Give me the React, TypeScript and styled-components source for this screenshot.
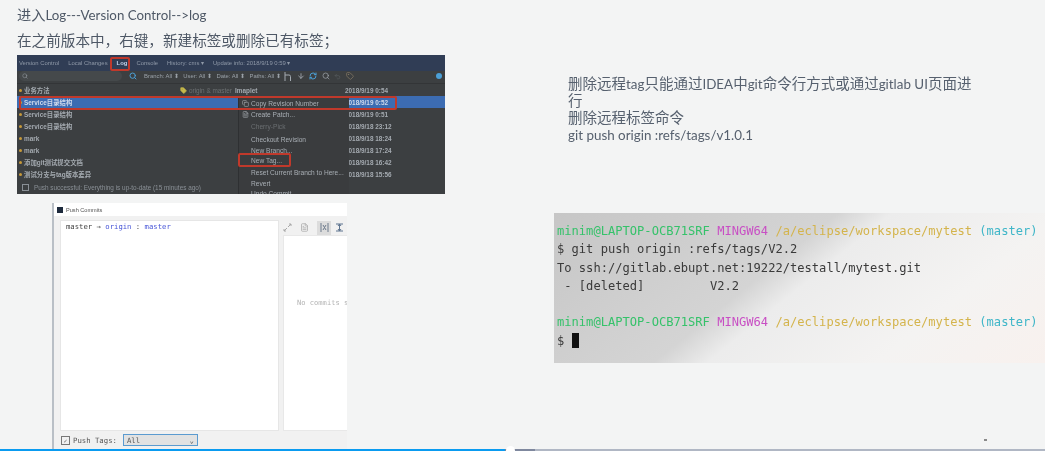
import styled, { createGlobalStyle } from 'styled-components';
import { ArrowDown, Copy, FileText, RefreshCw, Search, Tag, Undo2 } from 'lucide-react';

const GlobalStyle = createGlobalStyle`
    html, body {
        margin: 0;
        padding: 0;
        background: #f3f4f4;
    }
    #root {
        width: 1045px;
        height: 451px;
        overflow: hidden;
    }
`;

const Page = styled.div`
    width: 1045px;
    height: 451px;
    display: flex;
    flex-direction: column;
    background: #f3f4f4;
    font-family: 'Lato', 'Noto Sans CJK SC', sans-serif;
    color: #4e5866;
`;
const Slides = styled.div`
    flex: 1;
    min-height: 0;
    display: grid;
    grid-template-columns: 554px 491px;
    overflow: hidden;
`;
const LeftColumn = styled.section`
    display: flex;
    flex-direction: column;
    padding: 7px 0 0 17px;
`;
const Heading = styled.p`
    margin: 0;
    font-size: 13.3px;
    line-height: 17px;
    filter: blur(0.4px);
`;
const SubHeading = styled.p`
    margin: 5px 0 3px;
    font-size: 14.6px;
    line-height: 23px;
    filter: blur(0.4px);
`;
const Cjk = styled.span<{ $size?: number }>`
    font-size: ${(p) => p.$size ?? 14.5}px;
    line-height: 1;
`;

/* IDE log screenshot */
const Ide = styled.div`
    position: relative;
    flex: none;
    width: 428px;
    height: 139px;
    background: #3c3f41;
    overflow: hidden;
    color: #a9b0b6;
    font-family: 'Liberation Sans', 'Noto Sans CJK SC', sans-serif;
    font-size: 6.4px;
    filter: blur(0.5px);
`;
const IdeTabs = styled.div`
    height: 16px;
    display: flex;
    align-items: center;
    gap: 9px;
    padding-left: 2px;
    background: #303d55;
    font-size: 5.9px;
`;
const IdeTab = styled.span<{ $active?: boolean }>`
    color: ${(p) => (p.$active ? '#c4d4ec' : '#8f99a8')};
    font-weight: ${(p) => (p.$active ? 700 : 400)};
`;
const IdeFilters = styled.div`
    height: 13px;
    box-sizing: border-box;
    display: flex;
    align-items: center;
    padding: 0 3px 2px 2px;
    background: #3c3f41;
    border-bottom: 1px solid #333537;
    color: #9aa1a8;
`;
const SearchField = styled.div`
    width: 103px;
    height: 10px;
    flex: none;
    display: flex;
    align-items: center;
    padding-left: 3px;
    box-sizing: border-box;
    border-radius: 5px;
    background: #45494b;
    color: #9aa1a8;
`;
const FilterLabels = styled.div`
    width: 140px;
    flex: none;
    display: flex;
    gap: 4.5px;
    margin-left: 7px;
    font-size: 5.9px;
    white-space: nowrap;
`;
const FilterIcons = styled.div`
    display: flex;
    align-items: center;
    gap: 4.5px;
    flex: 1;
    color: #a4abb2;
`;
const BlueDot = styled.span`
    width: 6px;
    height: 6px;
    border-radius: 50%;
    background: #4b9fd6;
`;
const IdeRow = styled.div<{ $selected?: boolean }>`
    height: 12px;
    display: grid;
    grid-template-columns: 161px 55px 110px 1fr;
    align-items: center;
    padding-left: 2px;
    background: ${(p) => (p.$selected ? '#3c6cb2' : 'transparent')};
    color: ${(p) => (p.$selected ? '#cfdaec' : '#a4aab0')};
`;
const Message = styled.span`
    display: flex;
    align-items: center;
    gap: 2px;
    font-weight: 700;
    white-space: nowrap;
`;
const Node = styled.i`
    width: 3px;
    height: 3px;
    border-radius: 50%;
    background: #c79a3a;
`;
const RefName = styled.span`
    display: flex;
    align-items: center;
    gap: 2px;
    color: #6c7072;
    white-space: nowrap;
`;
const Author = styled.span`
    font-weight: 700;
`;
const DateCell = styled.span`
    font-weight: 700;
    white-space: nowrap;
`;
const IdeStatus = styled.div`
    height: 14px;
    display: flex;
    align-items: center;
    gap: 5px;
    padding-left: 5px;
    color: #8a9096;
`;
const StatusBox = styled.i`
    width: 5px;
    height: 5px;
    border: 1px solid #8a9096;
`;
const ContextMenu = styled.div`
    position: absolute;
    left: 222px;
    top: 42px;
    width: 110px;
    height: 100px;
    padding-left: 12px;
    box-sizing: border-box;
    background: #3a3c3e;
    box-shadow: -1px 0 0 #2e3032;
    color: #a8aeb4;
    font-size: 6.6px;
`;
const MenuItem = styled.div<{ $muted?: boolean; $h: number }>`
    position: relative;
    height: ${(p) => p.$h}px;
    display: flex;
    align-items: center;
    white-space: nowrap;
    color: ${(p) => (p.$muted ? '#6b6f72' : '#a8aeb4')};
    svg {
        position: absolute;
        left: -9px;
    }
`;
const RedMark = styled.div<{ $l: number; $t: number; $w: number; $h: number }>`
    position: absolute;
    left: ${(p) => p.$l}px;
    top: ${(p) => p.$t}px;
    width: ${(p) => p.$w}px;
    height: ${(p) => p.$h}px;
    box-sizing: border-box;
    border: 2px solid #c0392b;
    border-radius: 2px;
`;

/* Push Commits dialog */
const PushDialog = styled.div`
    width: 295px;
    height: 246px;
    flex: none;
    margin: 9px 0 0 35px;
    display: flex;
    flex-direction: column;
    background: #f1f1f1;
    border-left: 2px solid #b9bfc6;
    box-sizing: border-box;
    font-family: 'DejaVu Sans Mono', monospace;
    filter: blur(0.4px);
`;
const DialogTitle = styled.div`
    height: 13px;
    flex: none;
    display: flex;
    align-items: center;
    gap: 3px;
    padding-left: 3px;
    background: #ffffff;
    font-family: 'Liberation Sans', sans-serif;
    font-size: 5.6px;
    color: #555;
`;
const TitleIcon = styled.i`
    width: 6px;
    height: 6px;
    background: #1d2a3c;
`;
const DialogBody = styled.div`
    height: 215px;
    flex: none;
    display: grid;
    grid-template-columns: 219px 1fr;
    gap: 4px;
    padding: 4px 0 0 6px;
    box-sizing: border-box;
`;
const BranchPanel = styled.div`
    background: #ffffff;
    border: 1px solid #e6e6e6;
    padding: 1px 5px;
    font-size: 7.25px;
    line-height: 9px;
    color: #444;
`;
const Remote = styled.span`
    color: #4a58d8;
`;
const DetailsColumn = styled.div`
    display: flex;
    flex-direction: column;
    min-width: 0;
`;
const DetailsToolbar = styled.div`
    height: 15px;
    flex: none;
    display: flex;
    align-items: center;
    gap: 8px;
    color: #a8a8a8;
`;
const ToggleIcon = styled.span<{ $on?: boolean }>`
    width: 14px;
    height: 14px;
    display: flex;
    align-items: center;
    justify-content: center;
    background: ${(p) => (p.$on ? '#dcdcdc' : 'transparent')};
    color: ${(p) => (p.$on ? '#6d7a8c' : '#5f7590')};
    & + & {
        margin-left: -7px;
    }
`;
const DetailsPanel = styled.div`
    flex: 1;
    padding: 62px 0 0 13px;
    background: #ffffff;
    border: 1px solid #e8e8e8;
    border-right: 0;
    font-size: 7.1px;
    color: #b4b4b4;
    white-space: nowrap;
    overflow: hidden;
`;
const DialogFooter = styled.div`
    display: flex;
    align-items: center;
    height: 18px;
    padding-left: 7px;
    box-sizing: border-box;
    font-size: 7.3px;
    color: #555;
`;
const CheckBox = styled.span`
    width: 7px;
    height: 7px;
    margin-right: 3px;
    border: 1px solid #777;
    font-size: 6px;
    line-height: 7px;
    text-align: center;
`;
const SelectBox = styled.div`
    width: 75px;
    height: 12px;
    margin-left: 6px;
    padding: 0 3px;
    box-sizing: border-box;
    display: flex;
    align-items: center;
    justify-content: space-between;
    background: #e2e2e2;
    border: 1px solid #5b9bd0;
`;

/* right column */
const RightColumn = styled.section`
    display: flex;
    flex-direction: column;
    padding-top: 76px;
`;
const Notes = styled.div`
    width: 405px;
    height: 68px;
    flex: none;
    margin-left: 14px;
    font-size: 13.4px;
    line-height: 17px;
    color: #56606e;
    filter: blur(0.4px);
`;
const Terminal = styled.pre`
    height: 150px;
    flex: none;
    margin: 69px 0 0;
    padding: 9px 0 0 3px;
    box-sizing: border-box;
    background: linear-gradient(141deg, #c6c6c6 0%, #d4d4d4 42%, #ececec 50%, #f4f3f2 75%, #f8f1ee 100%);
    font-family: 'DejaVu Sans Mono', monospace;
    font-size: 12.1px;
    line-height: 18.3px;
    color: #3a3a3a;
    overflow: hidden;
    filter: blur(0.4px);
`;
const TermColor = styled.span<{ $c: string }>`
    color: ${(p) => p.$c};
`;
const Cursor = styled.span`
    display: inline-block;
    width: 7px;
    height: 15px;
    vertical-align: -3px;
    background: #111;
`;
const Speck = styled.i`
    width: 3px;
    height: 2px;
    margin: 76px 0 0 430px;
    background: #8a8a8a;
`;

/* video progress bar */
const Progress = styled.div`
    position: relative;
    flex: none;
    height: 2px;
    background: #b0b7c4;
`;
const Played = styled.div`
    height: 2px;
    background: linear-gradient(to right, #0a9bf0 505px, #7f889e 505px);
`;
const Knob = styled.i`
    position: absolute;
    left: 506px;
    top: -3px;
    width: 9px;
    height: 9px;
    border-radius: 50%;
    background: #ffffff;
`;

const rows = [
    { msg: '业务方法', date: '2018/9/19 0:54', head: true },
    { msg: 'Service目录结构', date: '2018/9/19 0:52', selected: true },
    { msg: 'Service目录结构', date: '2018/9/19 0:51' },
    { msg: 'Service目录结构', date: '2018/9/18 23:12' },
    { msg: 'mark', date: '2018/9/18 18:24' },
    { msg: 'mark', date: '2018/9/18 17:24' },
    { msg: '添加git测试提交文档', date: '2018/9/18 16:42' },
    { msg: '测试分支与tag版本差异', date: '2018/9/18 15:56' },
];

const Prompt = () => (
    <>
        <TermColor $c="#35c26a">minim@LAPTOP-OCB71SRF</TermColor> <TermColor $c="#c84fc4">MINGW64</TermColor>{' '}
        <TermColor $c="#d4b44c">/a/eclipse/workspace/mytest</TermColor> <TermColor $c="#3fb6c8">(master)</TermColor>
    </>
);

export default function App() {
    return (
        <Page>
            <GlobalStyle />
            <Slides>
                <LeftColumn>
                    <Heading>
                        <Cjk $size={14.2}>进入</Cjk>Log---Version Control--&gt;log
                    </Heading>
                    <SubHeading>在之前版本中，右键，新建标签或删除已有标签；</SubHeading>
                    <Ide>
                        <IdeTabs>
                            <IdeTab>Version Control</IdeTab>
                            <IdeTab>Local Changes</IdeTab>
                            <IdeTab $active>Log</IdeTab>
                            <IdeTab>Console</IdeTab>
                            <IdeTab>History: cms ▾</IdeTab>
                            <IdeTab>Update info: 2018/9/19 0:59 ▾</IdeTab>
                        </IdeTabs>
                        <IdeFilters>
                            <SearchField>
                                <Search size={6} strokeWidth={2} />
                            </SearchField>
                            <Search size={8} strokeWidth={3} color="#4b9fd6" style={{ marginLeft: 7 }} />
                            <FilterLabels>
                                <span>Branch: All ⬍</span>
                                <span>User: All ⬍</span>
                                <span>Date: All ⬍</span>
                                <span>Paths: All ⬍</span>
                            </FilterLabels>
                            <FilterIcons>
                                <svg width="8" height="9" viewBox="0 0 8 9" fill="none" stroke="currentColor">
                                    <path d="M1 0v9M1 3h4a1.5 1.5 0 0 1 1.5 1.5V9" />
                                </svg>
                                <ArrowDown size={8} strokeWidth={2.5} />
                                <RefreshCw size={8} strokeWidth={3} color="#4b9fd6" />
                                <Search size={8} strokeWidth={2} />
                                <Undo2 size={7} strokeWidth={2} color="#5a5e62" />
                                <Tag size={8} strokeWidth={2} color="#8d7f6a" />
                            </FilterIcons>
                            <BlueDot />
                        </IdeFilters>
                        {rows.map((row) => (
                            <IdeRow key={row.date} $selected={row.selected}>
                                <Message>
                                    <Node />
                                    {row.msg}
                                </Message>
                                <RefName>
                                    {row.head ? (
                                        <>
                                            <Tag size={7} color="#a8a04a" fill="#c8b94a" />
                                            origin &amp; master
                                        </>
                                    ) : null}
                                </RefName>
                                <Author>{row.head ? 'Imaplet' : null}</Author>
                                <DateCell>{row.date}</DateCell>
                            </IdeRow>
                        ))}
                        <IdeStatus>
                            <StatusBox />
                            Push successful: Everything is up-to-date (15 minutes ago)
                        </IdeStatus>
                        <ContextMenu>
                            <MenuItem $h={12}>
                                <Copy size={7} />
                                Copy Revision Number
                            </MenuItem>
                            <MenuItem $h={11}>
                                <FileText size={7} />
                                Create Patch...
                            </MenuItem>
                            <MenuItem $h={13} $muted>
                                Cherry-Pick
                            </MenuItem>
                            <MenuItem $h={12}>Checkout Revision</MenuItem>
                            <MenuItem $h={10}>New Branch...</MenuItem>
                            <MenuItem $h={11}>New Tag...</MenuItem>
                            <MenuItem $h={12}>Reset Current Branch to Here...</MenuItem>
                            <MenuItem $h={10}>Revert</MenuItem>
                            <MenuItem $h={10}>Undo Commit</MenuItem>
                        </ContextMenu>
                        <RedMark $l={93} $t={2} $w={20} $h={14} />
                        <RedMark $l={2} $t={41} $w={378} $h={14} />
                        <RedMark $l={221} $t={98} $w={53} $h={14} />
                    </Ide>
                    <PushDialog>
                        <DialogTitle>
                            <TitleIcon />
                            Push Commits
                        </DialogTitle>
                        <DialogBody>
                            <BranchPanel>
                                master → <Remote>origin</Remote> : <Remote>master</Remote>
                            </BranchPanel>
                            <DetailsColumn>
                                <DetailsToolbar>
                                    <svg width="9" height="9" viewBox="0 0 9 9" fill="none" stroke="currentColor">
                                        <path d="M1 8l3-3M5 4l3-3M6 1h2v2M1 6v2h2" />
                                    </svg>
                                    <FileText size={9} />
                                    <ToggleIcon $on>
                                        <svg width="9" height="9" viewBox="0 0 9 9" fill="none" stroke="currentColor">
                                            <path d="M1 0v9M8 0v9M3 2l1.5 2.5L6 2M3 7l1.5-2.5L6 7" />
                                        </svg>
                                    </ToggleIcon>
                                    <ToggleIcon>
                                        <svg width="9" height="9" viewBox="0 0 9 9" fill="none" stroke="currentColor">
                                            <path d="M1 1h7M1 8h7M4.5 1v7M3 3l1.5-2L6 3M3 6l1.5 2L6 6" />
                                        </svg>
                                    </ToggleIcon>
                                </DetailsToolbar>
                                <DetailsPanel>No commits selected</DetailsPanel>
                            </DetailsColumn>
                        </DialogBody>
                        <DialogFooter>
                            <CheckBox>✓</CheckBox>
                            Push Tags:
                            <SelectBox>
                                All
                                <span>⌄</span>
                            </SelectBox>
                        </DialogFooter>
                    </PushDialog>
                </LeftColumn>
                <RightColumn>
                    <Notes>
                        <Cjk>删除远程</Cjk>tag<Cjk>只能通过</Cjk>IDEA<Cjk>中</Cjk>git<Cjk>命令行方式或通过</Cjk>gitlab UI
                        <Cjk>页面进行</Cjk>
                        <br />
                        <Cjk>删除远程标签命令</Cjk>
                        <br />
                        git push origin :refs/tags/v1.0.1
                    </Notes>
                    <Terminal>
                        <Prompt />
                        {'\n$ git push origin :refs/tags/V2.2\nTo ssh://gitlab.ebupt.net:19222/testall/mytest.git\n - [deleted]         V2.2\n\n'}
                        <Prompt />
                        {'\n$ '}
                        <Cursor />
                    </Terminal>
                    <Speck />
                </RightColumn>
            </Slides>
            <Progress>
                <Played style={{ width: 535 }} />
                <Knob />
            </Progress>
        </Page>
    );
}
